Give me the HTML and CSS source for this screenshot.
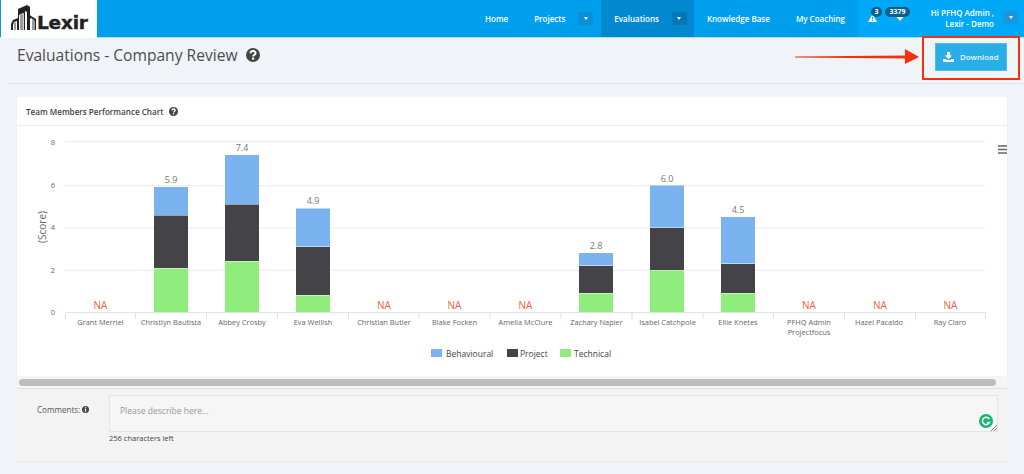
FILE: index.html
```html
<!DOCTYPE html>
<html lang="en">
<head>
<meta charset="utf-8">
<title>Evaluations - Company Review</title>
<link rel="stylesheet" href="styles.css">
</head>
<body>
<header class="topbar">
  <a class="logo">
    <svg class="logo-mark" width="27" height="26" viewBox="0 0 27 26">
      <path fill="#222" d="M0 25V19l2-4 5-2V4l9-4 3 2v8l1 1 5 3v11h-2V15l-3-2-1 1v11h-3V7l-2-1v19h-2V8l-4 2v15H6V16l-3 1-1 3v5z"/>
      <path fill="#9c9c9c" d="M3 25v-7l2-1v8zM9 25V10l4-2v17zM21 25V14l3 2v9z"/>
      <path fill="#d0d0d0" d="M12 25V9l1-1v17z"/>
    </svg>
    <span class="logo-text">Lexir</span>
  </a>
  <nav class="nav">
    <a class="nav-item">Home</a>
    <a class="nav-item nav-caret">Projects<span class="caret-btn"><i class="caret"></i></span></a>
    <a class="nav-item nav-caret nav-active">Evaluations<span class="caret-btn"><i class="caret"></i></span></a>
    <a class="nav-item">Knowledge Base</a>
    <a class="nav-item">My Coaching</a>
  </nav>
  <div class="top-right">
    <div class="alerts">
      <span class="alert">
        <svg width="9" height="8" viewBox="0 0 10 9"><path fill="#fff" fill-rule="evenodd" d="M5 0 10 9H0zM4.400 3v3h1.200V3zm0 3.700v1.100h1.200V6.700z"/></svg>
        <b class="pill">3</b>
      </span>
      <span class="alert alert-b">
        <svg width="8" height="6" viewBox="0 0 8 6"><path fill="#fff" d="M0 1.500 1.500 0 4 2.500 6.500 0 8 1.500 4 6z"/></svg>
        <b class="pill">3379</b>
      </span>
    </div>
    <div class="user">
      <div class="user-text"><div>Hi PFHQ Admin ,</div><div>Lexir - Demo</div></div>
      <span class="caret-btn"><i class="caret"></i></span>
    </div>
  </div>
</header>

<section class="title-row">
  <h1 class="title">Evaluations - Company Review
    <svg class="help-lg" width="14" height="14" viewBox="0 0 14 14"><circle cx="7" cy="7" r="7" fill="#444"/><path fill="none" stroke="#fff" stroke-width="2" d="M4.500 5.300C4.600 3.800 5.700 3.100 7 3.100c1.500 0 2.600.8 2.600 2 0 1.900-2.500 1.700-2.500 3.400"/><rect x="6" y="9.600" width="2.200" height="2" fill="#fff"/></svg>
  </h1>
  <a class="download">
    <svg width="11" height="10" viewBox="0 0 11 10"><path fill="#fff" d="M4 0h3v3.500h2.200L5.500 7 1.800 3.500H4zM0 7h2.500l1.300 1h3.400l1.300-1H11v3H0z"/></svg>
    <span>Download</span>
  </a>
</section>

<main class="card">
  <div class="card-head">Team Members Performance Chart
    <svg width="9" height="9" viewBox="0 0 14 14"><circle cx="7" cy="7" r="7" fill="#444"/><path fill="none" stroke="#fff" stroke-width="2" d="M4.500 5.300C4.600 3.800 5.700 3.100 7 3.100c1.500 0 2.600.8 2.600 2 0 1.900-2.500 1.700-2.500 3.400"/><rect x="6" y="9.600" width="2.200" height="2" fill="#fff"/></svg>
  </div>
  <div class="chart">
    <svg class="chart-svg" width="990" height="249" viewBox="17 126 990 249">
      <g class="grid">
        <path d="M65 141.700H985M65 185.700H985M65 228H985M65 270.300H985"/>
      </g>
      <g class="ylabels">
        <text x="55" y="145">8</text><text x="55" y="188">6</text><text x="55" y="230">4</text><text x="55" y="273">2</text><text x="55" y="315">0</text>
      </g>
      <text class="ytitle" transform="translate(46 227) rotate(-90)">(Score)</text>
      <g class="bars">
        <rect class="b" x="154" y="187" width="34" height="28"/><rect class="p" x="154" y="215.500" width="34" height="52.500"/><rect class="t" x="154" y="268.500" width="34" height="44"/>
        <rect class="b" x="225" y="155" width="34" height="49"/><rect class="p" x="225" y="204.500" width="34" height="56.500"/><rect class="t" x="225" y="261.500" width="34" height="51"/>
        <rect class="b" x="296" y="208.500" width="34" height="38"/><rect class="p" x="296" y="247" width="34" height="48"/><rect class="t" x="296" y="295.500" width="34" height="17"/>
        <rect class="b" x="579" y="253" width="34" height="12.500"/><rect class="p" x="579" y="266" width="34" height="27"/><rect class="t" x="579" y="293.500" width="34" height="19"/>
        <rect class="b" x="650" y="185.500" width="34" height="42"/><rect class="p" x="650" y="228" width="34" height="42"/><rect class="t" x="650" y="270.500" width="34" height="42"/>
        <rect class="b" x="721" y="217" width="34" height="46.500"/><rect class="p" x="721" y="264" width="34" height="29"/><rect class="t" x="721" y="293.500" width="34" height="19"/>
      </g>
      <g class="totals">
        <text x="171" y="183">5.9</text><text x="242" y="151">7.4</text><text x="313" y="204">4.9</text><text x="596" y="249">2.8</text><text x="667" y="182">6.0</text><text x="738" y="213">4.5</text>
      </g>
      <g class="na">
        <text x="100.500" y="309">NA</text><text x="384" y="309">NA</text><text x="454.500" y="309">NA</text><text x="525.500" y="309">NA</text><text x="809" y="309">NA</text><text x="880" y="309">NA</text><text x="950.500" y="309">NA</text>
      </g>
      <path class="axis" d="M65 312.700H986M65.500 313v6M135.500 313v6M206.500 313v6M277.500 313v6M348.500 313v6M419 313v6M490 313v6M561 313v6M632 313v6M703 313v6M773.500 313v6M844.500 313v6M915.500 313v6M985.500 313v6"/>
      <g class="xlabels">
        <text x="100.500" y="325">Grant Merriel</text><text x="171" y="325">Christlyn Bautista</text><text x="242" y="325">Abbey Crosby</text><text x="313" y="325">Eva Wellish</text><text x="384" y="325">Christian Butler</text><text x="454.500" y="325">Blake Focken</text><text x="525.500" y="325">Amelia McClure</text><text x="596.500" y="325">Zachary Napier</text><text x="667.500" y="325">Isabel Catchpole</text><text x="738" y="325">Ellie Knetes</text><text x="809" y="325">PFHQ Admin</text><text x="809" y="335">Projectfocus</text><text x="879" y="325">Hazel Pacaldo</text><text x="950" y="325">Ray Claro</text>
      </g>
      <g class="legend">
        <rect class="b" x="431" y="349" width="11" height="8"/><text x="446" y="357">Behavioural</text>
        <rect class="p" x="507" y="349" width="11" height="8"/><text x="520" y="357">Project</text>
        <rect class="t" x="560" y="349" width="11" height="8"/><text x="574" y="357">Technical</text>
      </g>
      <path class="burger" d="M998 146h9M998 149.500h9M998 153h9"/>
    </svg>
  </div>
  <div class="scroll"><div class="thumb"></div></div>
  <div class="comments">
    <label class="c-label">Comments:
      <svg width="7" height="7" viewBox="0 0 8 8"><circle cx="4" cy="4" r="4" fill="#444"/><rect x="3.300" y="3.200" width="1.400" height="3.300" fill="#fff"/><rect x="3.300" y="1.300" width="1.400" height="1.300" fill="#fff"/></svg>
    </label>
    <div class="c-field">
      <div class="textarea">Please describe here...
        <svg class="grammarly" width="14" height="14" viewBox="0 0 14 14"><circle cx="7" cy="7" r="7" fill="#15b66f"/><path fill="none" stroke="#fff" stroke-width="1.500" d="M10.300 5A3.700 3.700 0 1 0 10.500 8.500H7.800"/></svg>
        <svg class="resize" width="6" height="6" viewBox="0 0 6 6"><path stroke="#666" stroke-width=".8" d="M0 6 6 0M3 6 6 3"/></svg>
      </div>
      <div class="counter">256 characters left</div>
    </div>
  </div>
</main>

<svg class="annot-arrow" width="124" height="20" viewBox="0 0 124 20"><path fill="#f5300f" d="M0 9.500 110 8.500V2l14 8-14 7v-5.500L0 10.500z"/></svg>
<div class="annot-box"></div>
</body>
</html>
```

FILE: styles.css
```css
* { box-sizing: border-box; }
html, body { margin: 0; height: 474px; overflow: hidden; }
body { position: relative; background: #f0f4f8; font-family: "Open Sans", sans-serif; color: #444; }

.topbar { display: flex; height: 38px; background: #009fee; border-bottom: 1px solid #a8dcf7; color: #fff; }
.logo { display: flex; align-items: flex-end; width: 96px; height: 38px; background: #fff; padding: 0 0 8px 10px; margin-left: 1px; flex: none; }
.logo-mark { display: block; flex: none; margin-bottom: -1px; }
.logo-text { font: bold 18.500px/14px "DejaVu Sans", sans-serif; color: #222; -webkit-text-stroke: .4px #222; margin-left: -1px; letter-spacing: -.2px; }

.nav { display: flex; margin-left: auto; height: 37px; font-size: 8px; font-weight: 600; white-space: nowrap; }
.nav-item { display: flex; align-items: center; padding: 0 13px 1px; }
.nav-caret { padding-right: 8px; }
.nav-active { background: #0288cf; padding-right: 7px; }
.caret-btn { display: inline-flex; align-items: center; justify-content: center; flex: none; width: 15px; height: 13px; border-radius: 2px; background: #0a8fd8; margin-left: 13px; }
.nav-active .caret-btn { background: #0277b8; }
.caret { display: block; border: 2.500px solid transparent; border-top: 3px solid #fff; border-bottom: 0; }

.top-right { display: flex; flex: none; width: 166px; height: 37px; background: #00a8f8; }
.alerts { display: flex; width: 60px; padding-left: 10px; }
.alert { position: relative; display: block; width: 17px; height: 37px; }
.alert svg { position: absolute; left: 0; top: 14px; }
.alert-b { width: 25px; }
.alert-b svg { left: 11px; top: 15px; }
.pill { position: absolute; left: 3px; top: 7px; min-width: 11px; height: 10px; line-height: 10px; border-radius: 5px; background: #0c5f8c; text-align: center; font-weight: 700; font-size: 7px; }
.alert-b .pill { left: 0; width: 25px; }
.user { display: flex; align-items: center; justify-content: flex-end; flex: 1; padding-right: 6px; font-size: 8px; font-weight: 600; }
.user-text { text-align: right; line-height: 11px; white-space: nowrap; margin-top: -2px; }
.user .caret-btn { margin-left: 9px; background: #1a95de; margin-bottom: 3px; }

.title-row { display: flex; align-items: flex-start; justify-content: space-between; height: 46px; margin-left: 7px; border-bottom: 1px solid #e1e5ea; padding: 0 17px 0 10px; }
.title { margin: 6px 0 0; font-size: 15.600px; line-height: 22px; font-weight: 400; color: #4d4d4d; display: flex; align-items: center; gap: 8px; white-space: nowrap; }
.download { display: flex; align-items: center; gap: 6px; width: 72px; height: 28px; margin-top: 5px; padding-left: 7px; background: #29aee8; border: 1px solid #4fbdec; color: #e8f6fc; font-size: 7.900px; font-weight: 600; }

.card { margin: 13px 0 0 17px; width: 990px; height: 364px; background: #fff; box-shadow: 0 1px 1px #e4e8ec; display: flex; flex-direction: column; }
.card-head { height: 29px; border-bottom: 1px solid #ececec; padding-left: 9px; font-size: 8.100px; font-weight: 600; color: #444; display: flex; align-items: center; gap: 6px; }
.chart { height: 250px; flex: none; }
.chart-svg { display: block; }
.grid path { stroke: #e8ebee; stroke-width: 1; fill: none; }
.ylabels text { font-size: 7.500px; fill: #666; text-anchor: end; }
.ytitle { font-size: 10px; fill: #666; text-anchor: middle; }
.b { fill: #7ab3ef; }
.p { fill: #434348; }
.t { fill: #90ed7d; }
.totals text { font-size: 9px; fill: #777; text-anchor: middle; }
.na text { font-size: 10px; fill: #f4603c; text-anchor: middle; }
.axis { stroke: #d8e2ee; stroke-width: 1; fill: none; }
.xlabels text { font-size: 7.400px; fill: #666; text-anchor: middle; }
.legend text { font-size: 8.500px; fill: #444; }
.burger { stroke: #666; stroke-width: 1.500; fill: none; }

.scroll { height: 13px; background: #f5f5f5; padding: 3px 11px 3px 2px; border-bottom: 1px solid #e0e0e0; flex: none; }
.thumb { height: 7px; border-radius: 4px; background: #bdbdbd; }
.comments { flex: 1; display: flex; background: #f3f3f3; padding-top: 6px; }
.c-label { width: 92px; padding: 9px 0 0 20px; font-size: 8.100px; color: #555; display: flex; gap: 2px; align-items: flex-start; line-height: 11px; white-space: nowrap; }
.c-label svg { margin-top: 2px; }
.c-field { width: 889px; }
.textarea { position: relative; height: 37px; background: #f6f6f6; border: 1px solid #e4e4e4; padding: 9px 10px; font-size: 8.500px; line-height: 11px; color: #999; }
.grammarly { position: absolute; right: 4px; bottom: 3px; }
.resize { position: absolute; right: 0; bottom: 0; }
.counter { font-size: 7.500px; line-height: 10px; margin-top: 1px; color: #444; }

.annot-arrow { position: absolute; left: 795px; top: 47px; }
.annot-box { position: absolute; left: 922px; top: 36px; width: 98px; height: 44px; border: 2px solid #f5300f; }
```
